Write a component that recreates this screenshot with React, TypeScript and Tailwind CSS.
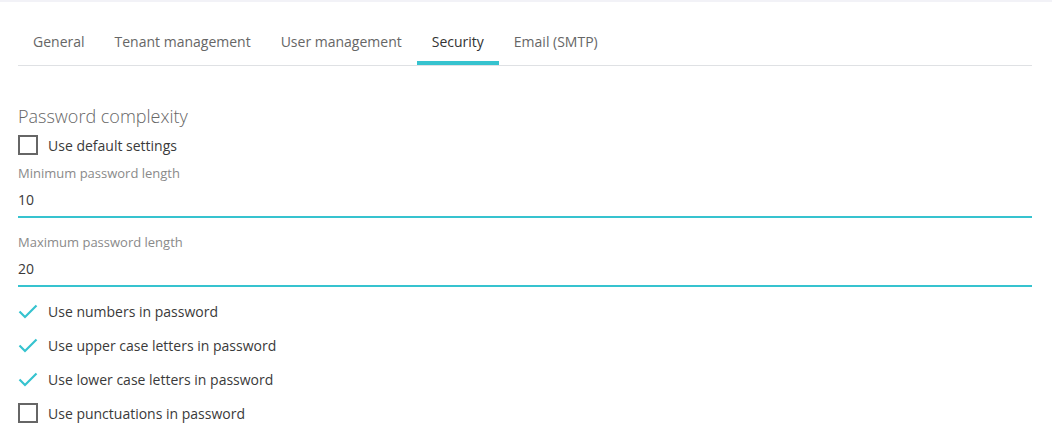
import { useState } from "react";

const tabs = ["General", "Tenant management", "User management", "Security", "Email (SMTP)"];

function CheckIcon() {
  return (
    <svg width="20" height="15" viewBox="0 0 20 15" fill="none" className="shrink-0">
      <path d="M1.5 7.5 L7 13 L18.5 1.5" stroke="#36c3cf" strokeWidth="2.2" strokeLinecap="butt" />
    </svg>
  );
}

function Box() {
  return <span className="block h-[20px] w-[20px] shrink-0 border-2 border-[#666666]" />;
}

function Field({ label, value }: { label: string; value: string }) {
  return (
    <div>
      <div className="text-[13px] leading-[18px] text-[#8a8a8a]">{label}</div>
      <div className="mt-[8px] border-b-2 border-[#36c3cf] pb-[6px] text-[14px] leading-[20px] text-[#3a3a3a]">
        {value}
      </div>
    </div>
  );
}

export default function App() {
  const [active, setActive] = useState("Security");
  const options = [
    { label: "Use numbers in password", on: true },
    { label: "Use upper case letters in password", on: true },
    { label: "Use lower case letters in password", on: true },
    { label: "Use punctuations in password", on: false },
  ];

  return (
    <div className="min-h-[448px] bg-white" style={{ fontFamily: '"Open Sans", sans-serif' }}>
      <div className="h-[2px] bg-[#f2f2f7]" />
      <div className="pl-[18px] pr-[20px]">
        {/* Tabs */}
        <div className="mt-[20px] flex border-b border-[#dfe1e4]">
          {tabs.map((t) => (
            <button
              key={t}
              onClick={() => setActive(t)}
              className={`relative px-[15px] pb-[13px] pt-[10px] text-[14px] leading-[20px] ${
                active === t ? "text-[#333333]" : "text-[#666666]"
              }`}
            >
              {t}
              {active === t && <span className="absolute bottom-0 left-0 right-0 h-[4px] bg-[#36c3cf]" />}
            </button>
          ))}
        </div>

        <div className="mt-[38px] text-[18px] font-light leading-[24px] text-[#666666]">Password complexity</div>

        <div className="mt-[7px] flex h-[20px] items-center gap-[10px] text-[14px] text-[#3a3a3a]">
          <Box />
          <span>Use default settings</span>
        </div>

        <div className="mt-[9px]">
          <Field label="Minimum password length" value="10" />
        </div>
        <div className="mt-[15px]">
          <Field label="Maximum password length" value="20" />
        </div>

        <div className="mt-[7px]">
          {options.map((o) => (
            <div key={o.label} className="flex h-[34px] items-center gap-[10px] text-[14px] text-[#3a3a3a]">
              {o.on ? <CheckIcon /> : <Box />}
              <span>{o.label}</span>
            </div>
          ))}
        </div>
      </div>
    </div>
  );
}
